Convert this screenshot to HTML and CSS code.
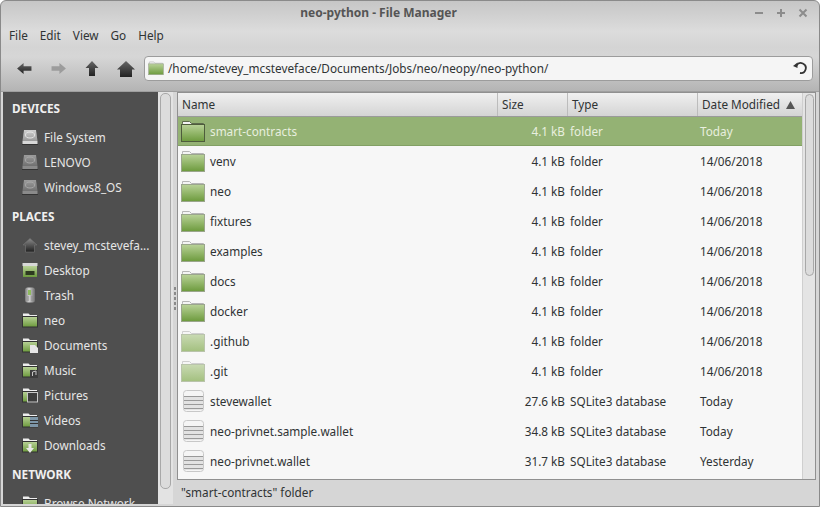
FILE: index.html
```html
<!DOCTYPE html>
<html lang="en">
<head>
    <meta charset="UTF-8">
    <title>neo-python - File Manager</title>
    <link rel="stylesheet" href="styles.css">
</head>
<body>
    <svg class="defs" width="0" height="0">
        <defs>
            <linearGradient id="fg" x1="0" y1="0" x2="0" y2="1">
                <stop offset="0" stop-color="#b9d298"/>
                <stop offset="1" stop-color="#6c9a3c"/>
            </linearGradient>
            <linearGradient id="fl" x1="0" y1="0" x2="0" y2="1">
                <stop offset="0" stop-color="#c9dab3"/>
                <stop offset="1" stop-color="#a3c07f"/>
            </linearGradient>
            <linearGradient id="hd" x1="0" y1="0" x2="0" y2="1">
                <stop offset="0" stop-color="#8a8a8a"/>
                <stop offset="1" stop-color="#1f1f1f"/>
            </linearGradient>
            <linearGradient id="tb" x1="0" y1="0" x2="0" y2="1">
                <stop offset="0" stop-color="#666"/>
                <stop offset="1" stop-color="#222"/>
            </linearGradient>
            <linearGradient id="dk" x1="0" y1="0" x2="0" y2="1">
                <stop offset="0" stop-color="#9c9c9c"/>
                <stop offset="1" stop-color="#707070"/>
            </linearGradient>
            <linearGradient id="dm" x1="0" y1="0" x2="0" y2="1">
                <stop offset="0" stop-color="#d0d0d0"/>
                <stop offset="1" stop-color="#999"/>
            </linearGradient>
            <linearGradient id="tr" x1="0" y1="0" x2="1" y2="0">
                <stop offset="0" stop-color="#777"/>
                <stop offset="0.4" stop-color="#d4d4d4"/>
                <stop offset="1" stop-color="#6c6c6c"/>
            </linearGradient>
            <symbol id="folder" viewBox="0 0 24 22">
                <path d="M1.500 3.500V1.500h7l2 2h12v4h-21z" fill="#f4f4f4" stroke="#b5b5b5"/>
                <rect x="0.500" y="4.500" width="23" height="17" fill="url(#fg)" stroke="#9aa68c"/>
            </symbol>
            <symbol id="folder-hidden" viewBox="0 0 24 22">
                <path d="M1.500 3.500V1.500h7l2 2h12v4h-21z" fill="#f6f6f6" stroke="#cfcfcf"/>
                <rect x="0.500" y="4.500" width="23" height="17" fill="url(#fl)" stroke="#b9c4ab"/>
            </symbol>
            <symbol id="folder-sel" viewBox="0 0 24 22">
                <path d="M1.500 3.500V1.500h7l2 2h12v4h-21z" fill="#f4f4f4" stroke="#5d6b4c"/>
                <rect x="0.500" y="4.500" width="23" height="17" fill="url(#fg)" stroke="#4e5c3c"/>
            </symbol>
            <symbol id="db" viewBox="0 0 21 22">
                <rect x="0.500" y="0.500" width="20" height="21" rx="3" fill="#f5f5f5" stroke="#c8c8c8"/>
                <rect x="1" y="6" width="19" height="14" fill="#e2e2e2"/>
                <path d="M1 6.500h19M1 10.500h19M1 14.500h19M1 18.500h19" stroke="#999"/>
            </symbol>
            <symbol id="disk" viewBox="0 0 16 16">
                <path d="M2 1h12l1.500 11H.5z" fill="url(#dk)"/>
                <ellipse cx="8" cy="6" rx="4.500" ry="3" fill="none" stroke="#a8a8a8"/>
                <rect x="0.500" y="12" width="15" height="3" fill="#8a8a8a"/>
                <path d="M0 15.500h16" stroke="#333"/>
            </symbol>
            <symbol id="disk-main" viewBox="0 0 16 16">
                <path d="M2 1h12l1.500 11H.5z" fill="url(#dm)"/>
                <ellipse cx="8" cy="6" rx="4.500" ry="3" fill="none" stroke="#e6e6e6"/>
                <rect x="0.500" y="12" width="15" height="3" fill="#d8d8d8"/>
                <path d="M0 15.500h16" stroke="#333"/>
            </symbol>
            <symbol id="side-folder" viewBox="0 0 16 16">
                <path d="M1 4V1.500h5.500L8 3h7v2H1z" fill="#eee"/>
                <rect x="0.500" y="4.500" width="15" height="10.500" fill="url(#fg)" stroke="#333"/>
            </symbol>
        </defs>
    </svg>

    <div class="window">
        <div class="titlebar">
            <span class="title">neo-python - File Manager</span>
            <div class="win-buttons">
                <svg width="10" height="10" viewBox="0 0 10 10"><path d="M1 5h8" stroke="#8c8c8c" stroke-width="2"/></svg>
                <svg width="10" height="10" viewBox="0 0 10 10"><path d="M1 5h8M5 1v8" stroke="#8c8c8c" stroke-width="2"/></svg>
                <svg width="10" height="10" viewBox="0 0 10 10"><path d="M1.500 1.500l7 7M8.500 1.500l-7 7" stroke="#8c8c8c" stroke-width="2"/></svg>
            </div>
        </div>

        <div class="menubar">
            <span>File</span><span>Edit</span><span>View</span><span>Go</span><span>Help</span>
        </div>

        <div class="toolbar">
            <div class="tool-btn">
                <svg width="15" height="13" viewBox="0 0 16 14"><path d="M0 7l7-6v3.500h8.500v5H7V13z" fill="url(#tb)"/></svg>
            </div>
            <div class="tool-btn">
                <svg width="15" height="13" viewBox="0 0 16 14"><path d="M16 7L9 1v3.500H.5v5H9V13z" fill="#9c9c9c"/></svg>
            </div>
            <div class="tool-btn">
                <svg width="14" height="15" viewBox="0 0 14 15"><path d="M7 0l6.500 7H10v8H4V7H.5z" fill="url(#tb)"/></svg>
            </div>
            <div class="tool-btn">
                <svg width="18" height="16" viewBox="0 0 18 16"><path d="M9 0l9 8.500h-3V16H3V8.500H0z" fill="url(#tb)"/></svg>
            </div>
            <div class="location">
                <svg class="loc-icon" width="16" height="14"><use href="#folder"/></svg>
                <span class="loc-text">/home/stevey_mcsteveface/Documents/Jobs/neo/neopy/neo-python/</span>
                <svg width="14" height="14" viewBox="0 0 14 14"><path d="M3.500 4.500A5 5 0 1 1 7 12" fill="none" stroke="#333" stroke-width="1.800"/><path d="M0 5l4.500-3.500V7z" fill="#333"/></svg>
            </div>
        </div>

        <div class="main">
            <div class="sidebar">
                <div class="side-list">
                    <div class="side-head">DEVICES</div>
                    <div class="side-item"><svg width="16" height="16"><use href="#disk-main"/></svg>File System</div>
                    <div class="side-item"><svg width="16" height="16"><use href="#disk"/></svg>LENOVO</div>
                    <div class="side-item"><svg width="16" height="16"><use href="#disk"/></svg>Windows8_OS</div>
                    <div class="side-head">PLACES</div>
                    <div class="side-item"><svg width="16" height="16" viewBox="0 0 16 16"><path d="M8 1.500l7 6.500h-2.500v7h-9V8H1z" fill="url(#hd)" stroke="#777" stroke-width="0.600"/></svg>stevey_mcstevefa...</div>
                    <div class="side-item"><svg width="16" height="16" viewBox="0 0 16 16"><rect x="0.500" y="1" width="15" height="3" fill="#d8d8d8"/><rect x="1" y="4" width="14" height="11" fill="url(#fg)"/><rect x="3.500" y="9" width="9" height="4" fill="#2d3a20"/></svg>Desktop</div>
                    <div class="side-item"><svg width="16" height="16" viewBox="0 0 16 16"><rect x="3" y="0.500" width="10" height="15" rx="2.500" fill="url(#tr)"/><rect x="6" y="3" width="3" height="5" fill="#8fbb5f"/><path d="M6 9v5M10 9v5" stroke="#8a8a8a"/></svg>Trash</div>
                    <div class="side-item"><svg width="16" height="16"><use href="#side-folder"/></svg>neo</div>
                    <div class="side-item"><svg width="16" height="16" viewBox="0 0 16 16"><use href="#side-folder"/><path d="M8 8h5l3 3v5H8z" fill="#e6e6e6"/></svg>Documents</div>
                    <div class="side-item"><svg width="16" height="16" viewBox="0 0 16 16"><use href="#side-folder"/><rect x="8" y="8" width="8" height="8" fill="#3c3c3c"/><path d="M10.500 14V10l3.500-1v4" stroke="#c4c4c4" fill="none"/></svg>Music</div>
                    <div class="side-item"><svg width="16" height="16" viewBox="0 0 16 16"><use href="#side-folder"/><rect x="5.500" y="5.500" width="10" height="9.500" fill="#3c3c3c" stroke="#c8c8c8"/></svg>Pictures</div>
                    <div class="side-item"><svg width="16" height="16" viewBox="0 0 16 16"><use href="#side-folder"/><rect x="8" y="5" width="8" height="10" fill="#7d96a8"/><path d="M8 8.500h8M8 11.500h8" stroke="#333"/></svg>Videos</div>
                    <div class="side-item"><svg width="16" height="16" viewBox="0 0 16 16"><use href="#side-folder"/><path d="M6.500 7h3v4H12l-4 5-4-5h2.500z" fill="#e8e8e8"/></svg>Downloads</div>
                    <div class="side-head">NETWORK</div>
                    <div class="side-item"><svg width="16" height="16"><use href="#side-folder"/></svg>Browse Network</div>
                </div>
                <div class="side-scroll"><div class="side-thumb"></div></div>
            </div>

            <div class="handle"><i></i><i></i><i></i><i></i><i></i></div>

            <div class="right-col">
                <div class="tree">
                    <div class="tree-body">
                        <div class="row header">
                            <div class="cell">Name</div>
                            <div class="cell">Size</div>
                            <div class="cell">Type</div>
                            <div class="cell date-head">Date Modified <svg class="sort" width="9" height="8" viewBox="0 0 9 8"><path d="M4.500 0L9 8H0z" fill="#555"/></svg></div>
                        </div>
                        <div class="row selected">
                            <div class="cell name"><svg width="24" height="22"><use href="#folder-sel"/></svg>smart-contracts</div>
                            <div class="cell size">4.1 kB</div><div class="cell">folder</div><div class="cell">Today</div>
                        </div>
                        <div class="row">
                            <div class="cell name"><svg width="24" height="22"><use href="#folder"/></svg>venv</div>
                            <div class="cell size">4.1 kB</div><div class="cell">folder</div><div class="cell">14/06/2018</div>
                        </div>
                        <div class="row">
                            <div class="cell name"><svg width="24" height="22"><use href="#folder"/></svg>neo</div>
                            <div class="cell size">4.1 kB</div><div class="cell">folder</div><div class="cell">14/06/2018</div>
                        </div>
                        <div class="row">
                            <div class="cell name"><svg width="24" height="22"><use href="#folder"/></svg>fixtures</div>
                            <div class="cell size">4.1 kB</div><div class="cell">folder</div><div class="cell">14/06/2018</div>
                        </div>
                        <div class="row">
                            <div class="cell name"><svg width="24" height="22"><use href="#folder"/></svg>examples</div>
                            <div class="cell size">4.1 kB</div><div class="cell">folder</div><div class="cell">14/06/2018</div>
                        </div>
                        <div class="row">
                            <div class="cell name"><svg width="24" height="22"><use href="#folder"/></svg>docs</div>
                            <div class="cell size">4.1 kB</div><div class="cell">folder</div><div class="cell">14/06/2018</div>
                        </div>
                        <div class="row">
                            <div class="cell name"><svg width="24" height="22"><use href="#folder"/></svg>docker</div>
                            <div class="cell size">4.1 kB</div><div class="cell">folder</div><div class="cell">14/06/2018</div>
                        </div>
                        <div class="row">
                            <div class="cell name"><svg width="24" height="22"><use href="#folder-hidden"/></svg>.github</div>
                            <div class="cell size">4.1 kB</div><div class="cell">folder</div><div class="cell">14/06/2018</div>
                        </div>
                        <div class="row">
                            <div class="cell name"><svg width="24" height="22"><use href="#folder-hidden"/></svg>.git</div>
                            <div class="cell size">4.1 kB</div><div class="cell">folder</div><div class="cell">14/06/2018</div>
                        </div>
                        <div class="row">
                            <div class="cell name"><svg class="db" width="21" height="22"><use href="#db"/></svg>stevewallet</div>
                            <div class="cell size">27.6 kB</div><div class="cell">SQLite3 database</div><div class="cell">Today</div>
                        </div>
                        <div class="row">
                            <div class="cell name"><svg class="db" width="21" height="22"><use href="#db"/></svg>neo-privnet.sample.wallet</div>
                            <div class="cell size">34.8 kB</div><div class="cell">SQLite3 database</div><div class="cell">Today</div>
                        </div>
                        <div class="row">
                            <div class="cell name"><svg class="db" width="21" height="22"><use href="#db"/></svg>neo-privnet.wallet</div>
                            <div class="cell size">31.7 kB</div><div class="cell">SQLite3 database</div><div class="cell">Yesterday</div>
                        </div>
                    </div>
                    <div class="tree-scroll"><div class="tree-thumb"></div></div>
                </div>
                <div class="statusbar">"smart-contracts" folder</div>
            </div>
        </div>
    </div>
</body>
</html>
```

FILE: styles.css
```css
html, body {
    margin: 0;
    padding: 0;
    height: 100%;
    overflow: hidden;
    background-color: #fff;
}
body {
    font-family: "Noto Sans", sans-serif;
    font-size: 11.75px;
    color: #2f3334;
}
.defs {
    position: absolute;
}
.window {
    box-sizing: border-box;
    width: 820px;
    height: 507px;
    display: flex;
    flex-direction: column;
    border: 1px solid #8a8a8a;
    border-radius: 6px 6px 0 0;
    background: linear-gradient(#c6c6c6 0, #dcdcdc 30px, #d4d4d4 46px, #d6d6d6 56px, #b4b4b4 90px, #d6d6d6 91px);
    overflow: hidden;
}
.titlebar {
    height: 23px;
    flex: none;
    display: flex;
    align-items: center;
    justify-content: center;
    position: relative;
    padding-right: 63px;
}
.title {
    font-size: 12px;
    font-weight: bold;
    color: #555;
    margin-top: -1px;
}
.win-buttons {
    position: absolute;
    right: 11px;
    top: 7px;
    display: flex;
    gap: 12px;
}
.menubar {
    height: 22px;
    flex: none;
    display: flex;
    align-items: center;
    gap: 12px;
    padding-left: 8px;
}
.toolbar {
    height: 45px;
    flex: none;
    display: flex;
    align-items: center;
    padding-left: 6px;
    padding-right: 6px;
    box-sizing: border-box;
}
.tool-btn {
    width: 34px;
    height: 26px;
    display: flex;
    align-items: center;
    justify-content: center;
}
.location {
    flex: 1;
    height: 25px;
    box-sizing: border-box;
    margin-left: 1px;
    display: flex;
    align-items: center;
    padding: 0 5px 1px 3px;
    background: #f5f5f5;
    border: 1px solid #9c9c9c;
    border-radius: 4px;
}
.loc-icon {
    margin-right: 4px;
}
.loc-text {
    flex: 1;
}
.main {
    flex: 1;
    min-height: 0;
    display: flex;
    padding: 0 3px 2px 2px;
    border-top: 1px solid #9f9f9f;
}
.sidebar {
    width: 170px;
    flex: none;
    display: flex;
    overflow: hidden;
}
.side-list {
    width: 155px;
    flex: none;
    background-color: #4f4f4f;
    color: #e6e6e6;
    overflow: hidden;
}
.side-head {
    height: 33px;
    line-height: 33px;
    padding-left: 9px;
    font-weight: bold;
    color: #f0f0f0;
}
.side-item {
    height: 25px;
    box-sizing: border-box;
    padding-bottom: 2px;
    display: flex;
    align-items: center;
    gap: 6px;
    padding-left: 19px;
    white-space: nowrap;
}
.side-item svg {
    flex: none;
}
.side-scroll {
    flex: 1;
    background-color: #e3e3e3;
    padding: 1px 2px;
}
.side-thumb {
    height: 396px;
    border: 1px solid #a8a8a8;
    border-radius: 5px;
    background-color: #dcdcdc;
    box-sizing: border-box;
}
.handle {
    width: 4px;
    flex: none;
    display: flex;
    flex-direction: column;
    justify-content: center;
    align-items: center;
    gap: 2px;
}
.handle i {
    width: 2px;
    height: 3px;
    background-color: #8a8a8a;
}
.right-col {
    flex: 1;
    min-width: 0;
    display: flex;
    flex-direction: column;
}
.tree {
    flex: 1;
    min-height: 0;
    display: flex;
    border: 1px solid #909090;
    background-color: #f7f7f7;
    overflow: hidden;
}
.tree-body {
    flex: 1;
    min-width: 0;
    overflow: hidden;
}
.row {
    height: 30px;
    display: grid;
    grid-template-columns: 320px 70px 130px 1fr;
    align-items: center;
}
.row .cell {
    padding-left: 2px;
}
.row .name {
    display: flex;
    align-items: center;
    gap: 5px;
    padding-left: 3px;
}
.row .size {
    text-align: right;
    padding-right: 3px;
}
.db {
    margin: 0 1px 0 2px;
}
.row.header {
    height: 24px;
    background: linear-gradient(#f0f0f0, #d4d4d4);
    border-bottom: 1px solid #9a9a9a;
    box-sizing: border-box;
}
.row.header .cell {
    height: 23px;
    line-height: 23px;
    padding-left: 4px;
    border-right: 1px solid #bcbcbc;
    box-sizing: border-box;
}
.row.header .date-head {
    border-right: 0;
}
.sort {
    margin-left: 3px;
}
.row.selected {
    height: 29px;
    background-color: #94b274;
    border-bottom: 1px solid #82a064;
    box-sizing: border-box;
    color: #e8efdf;
}
.tree-scroll {
    width: 13px;
    flex: none;
    background-color: #e4e4e4;
    border-left: 1px solid #cfcfcf;
    padding: 1px 1px 1px 2px;
    box-sizing: border-box;
}
.tree-thumb {
    height: 182px;
    border: 1px solid #a8a8a8;
    border-radius: 5px;
    background-color: #dcdcdc;
    box-sizing: border-box;
}
.statusbar {
    height: 24px;
    flex: none;
    display: flex;
    align-items: center;
    padding-left: 4px;
}
```
